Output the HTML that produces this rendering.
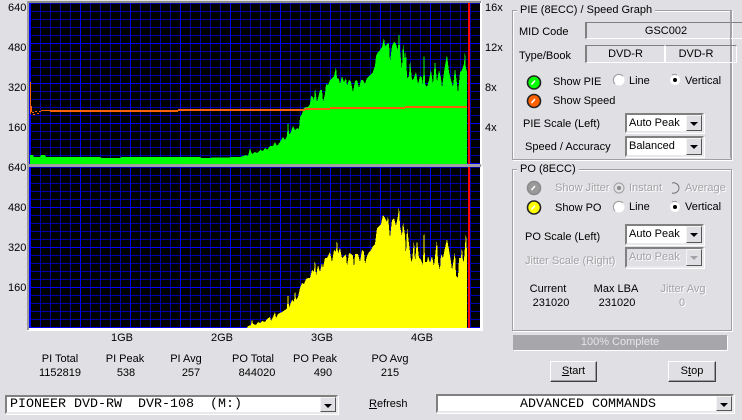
<!DOCTYPE html>
<html><head><meta charset="utf-8"><title>PIE / PO Scan</title>
<style>
html,body{margin:0;padding:0;background:#e0dfe3}
body{position:relative;width:742px;height:420px;overflow:hidden;font:11px "Liberation Sans",Arial,sans-serif;color:#000}
.t{position:absolute;line-height:14px;white-space:nowrap}
.c{position:absolute;line-height:14px;white-space:nowrap;width:100px;text-align:center}
.d{color:#a3a2a6;text-shadow:1px 1px 0 #fff}
.g{position:absolute;border:1px solid #a0a0a4;box-shadow:1px 1px 0 #fff,inset 1px 1px 0 #fff}
.lg{position:absolute;background:#e0dfe3;padding:0 3px;line-height:14px;white-space:nowrap}
.s{position:absolute;box-sizing:border-box;border:1px solid;border-color:#808080 #fff #fff #808080;text-align:center;line-height:16px}
.cb{position:absolute;box-sizing:border-box;background:#fff;border:2px solid;border-color:#808080 #e9e9ec #e9e9ec #808080;box-shadow:1px 1px 0 #fff;line-height:17px;white-space:nowrap;padding-left:2px}
.cb.off{background:#e0dfe3;color:#a3a2a6;text-shadow:1px 1px 0 #fff}
.ar{position:absolute;right:0;top:0;bottom:0;width:16px;background:#e0dfe3;box-sizing:border-box;border:1px solid;border-color:#f4f4f4 #555 #555 #f4f4f4}
.ar:after{content:"";position:absolute;left:3px;top:6px;border:4px solid transparent;border-top:4px solid #000;border-bottom:0}
.off .ar:after{border-top-color:#a3a2a6}
.mono{font-family:"Liberation Mono","Courier New",monospace;font-size:13.33px}
.b{position:absolute;box-sizing:border-box;background:#e0dfe3;border:1px solid;border-color:#fff #404040 #404040 #fff;box-shadow:inset -1px -1px 0 #9d9da1;text-align:center;line-height:18px}
svg{position:absolute;left:0;top:0}
</style></head><body>

<svg width="490" height="335" shape-rendering="crispEdges">
<defs>
<pattern id="g1" x="0" y="3" width="10" height="8" patternUnits="userSpaceOnUse"><rect width="10" height="8" fill="#000"/><rect width="1" height="8" fill="#0000a8"/><rect width="10" height="1" fill="#0000a8"/></pattern>
<pattern id="g2" x="0" y="167" width="10" height="8" patternUnits="userSpaceOnUse"><rect width="10" height="8" fill="#000"/><rect width="1" height="8" fill="#0000a8"/><rect width="10" height="1" fill="#0000a8"/></pattern>
</defs>
<rect x="27" y="1" width="455" height="164" fill="#fff"/>
<rect x="27" y="166" width="456" height="165" fill="#fff"/>
<rect x="27" y="1" width="454" height="2" fill="#8c8c8c"/>
<rect x="27" y="1" width="2" height="329" fill="#9a9a9a"/>
<rect x="27" y="164" width="454" height="3" fill="#a0a0a0"/>
<rect x="29" y="3" width="451" height="161" fill="url(#g1)"/>
<rect x="29" y="167" width="451" height="161" fill="url(#g2)"/>
<path fill="none" stroke="#0000ff" d="M30.5 3V164M80.5 3V164M130.5 3V164M180.5 3V164M230.5 3V164M280.5 3V164M330.5 3V164M380.5 3V164M430.5 3V164M30 43.5H480M30 83.5H480M30 123.5H480M30 163.5H480M30.5 167V328M80.5 167V328M130.5 167V328M180.5 167V328M230.5 167V328M280.5 167V328M330.5 167V328M380.5 167V328M430.5 167V328M30 207.5H480M30 247.5H480M30 287.5H480M30 327.5H480"/>
<rect x="29" y="3" width="2" height="161" fill="#0000ff"/>
<rect x="29" y="167" width="2" height="161" fill="#0000ff"/>
<polygon fill="#00ff00" points="30,164 30,155 33,155 34,157 40,157 41,155 45,155 46,157 100,157 101,158 120,158 121,157 200,157 201,158 240,157 246,155 248,156 250,148 252,154 255,152 257,153 260,150 263,151 265,148 267,150 270,146 273,146 275,142 277,146 280,142 283,137 285,140 287,136 288,120 289,134 291,132 293,126 295,130 297,128 299,129 300,117 302,114 304,108 306,107 308,107 310,104 311,96 313,97 314,100 315,88 317,102 319,94 320,90 322,90 323,102 325,94 326,84 328,85 330,80 332,78 334,76 336,67 337,78 339,79 340,84 342,76 344,82 346,78 347,86 349,80 351,82 353,92 355,81 357,80 359,88 361,80 363,80 365,84 367,78 369,76 371,74 373,72 375,66 376,56 378,52 380,50 382,47 384,38 385,46 387,44 389,43 390,62 392,46 394,42 396,44 398,50 399,30 400,50 402,70 403,43 405,60 406,50 407,78 409,76 410,60 412,80 414,78 416,72 418,84 420,76 422,78 423,86 424,47 425,84 427,87 429,80 431,70 433,84 435,60 437,82 439,70 441,78 442,88 444,72 446,60 447,55 449,72 451,80 453,87 455,68 457,84 458,93 460,72 462,70 464,64 465,50 466,72 467,68 467,164"/>
<g fill="#f8600a">
<rect x="30" y="82" width="1" height="32"/>
<rect x="31" y="106" width="1" height="6"/>
<rect x="32" y="112" width="2" height="1"/>
<rect x="33" y="114" width="2" height="1"/>
<rect x="35" y="111" width="2" height="1"/>
<rect x="37" y="113" width="2" height="1"/>
<rect x="39" y="111" width="2" height="1"/>
<rect x="41" y="110" width="9" height="1"/>
<rect x="50" y="110" width="128" height="2"/>
<rect x="178" y="109" width="127" height="2"/>
<rect x="305" y="108" width="25" height="2"/>
<rect x="330" y="107" width="75" height="2"/>
<rect x="405" y="106" width="62" height="2"/>
</g>
<polygon fill="#ffff00" points="247,328 248,326 251,325 252,319 253,324 256,325 258,322 260,323 262,321 265,322 267,319 270,317 271,321 273,317 275,312 276,318 278,314 282,312 285,310 287,308 288,292 289,308 290,305 292,300 294,302 295,290 296,300 298,297 300,288 302,283 304,284 306,279 308,278 310,278 312,270 314,272 315,259 316,276 318,265 320,272 322,263 323,268 325,258 327,258 329,254 330,252 332,262 334,250 336,252 337,239 338,254 340,248 342,258 344,256 346,254 347,266 349,253 351,254 353,256 354,268 355,254 358,254 360,262 362,250 364,252 365,264 367,256 369,252 371,250 373,246 375,244 377,228 379,226 381,224 383,215 385,218 387,222 388,216 390,238 392,220 394,218 396,226 398,216 399,206 400,226 402,236 403,222 405,235 406,256 407,227 409,244 411,260 412,262 414,240 415,262 417,240 419,258 421,260 423,265 424,225 425,262 427,262 428,256 430,263 432,256 434,266 436,248 437,240 438,262 440,270 441,254 443,258 445,248 447,239 449,250 451,262 452,270 454,258 455,252 456,276 458,278 459,258 461,258 462,247 463,262 464,260 466,232 467,253 467,328"/>
<rect x="468" y="3" width="2" height="161" fill="#ff0000"/>
<rect x="468" y="167" width="2" height="161" fill="#ff0000"/>
</svg>

<div class="t" style="left:8px;top:1px">640</div>
<div class="t" style="left:8px;top:41px">480</div>
<div class="t" style="left:8px;top:81px">320</div>
<div class="t" style="left:8px;top:121px">160</div>
<div class="t" style="left:8px;top:161px">640</div>
<div class="t" style="left:8px;top:201px">480</div>
<div class="t" style="left:8px;top:241px">320</div>
<div class="t" style="left:8px;top:281px">160</div>
<div class="t" style="left:485px;top:1px">16x</div>
<div class="t" style="left:485px;top:41px">12x</div>
<div class="t" style="left:485px;top:81px">8x</div>
<div class="t" style="left:485px;top:121px">4x</div>

<div class="c" style="left:72px;top:331px">1GB</div>
<div class="c" style="left:172px;top:331px">2GB</div>
<div class="c" style="left:272px;top:331px">3GB</div>
<div class="c" style="left:372px;top:331px">4GB</div>

<div class="c" style="left:10px;top:352px">PI Total</div>
<div class="c" style="left:75px;top:352px">PI Peak</div>
<div class="c" style="left:136px;top:352px">PI Avg</div>
<div class="c" style="left:203px;top:352px">PO Total</div>
<div class="c" style="left:265px;top:352px">PO Peak</div>
<div class="c" style="left:340px;top:352px">PO Avg</div>
<div class="c" style="left:10px;top:366px">1152819</div>
<div class="c" style="left:76px;top:366px">538</div>
<div class="c" style="left:141px;top:366px">257</div>
<div class="c" style="left:207px;top:366px">844020</div>
<div class="c" style="left:273px;top:366px">490</div>
<div class="c" style="left:340px;top:366px">215</div>

<div class="g" style="left:512px;top:10px;width:218px;height:148px"></div>
<div class="lg" style="left:517px;top:3px">PIE (8ECC) / Speed Graph</div>
<div class="t" style="left:519px;top:25px">MID Code</div>
<div class="s" style="left:585px;top:22px;width:157px;height:17px;padding-right:0;padding-left:3px;border-width:1px 0 1px 2px">GSC002</div>
<div style="position:absolute;left:730px;top:11px;width:1px;height:147px;background:#a0a0a4"></div>
<div class="t" style="left:519px;top:49px">Type/Book</div>
<div class="s" style="left:585px;top:45px;width:80px;height:18px;border-left-width:2px">DVD-R</div>
<div class="s" style="left:665px;top:45px;width:72px;height:18px;border-left-color:#fff;padding-right:10px">DVD-R</div>

<svg width="742" height="420" style="pointer-events:none">
<g stroke="#222" stroke-width="1.6">
<circle cx="534" cy="82.5" r="6.5" fill="#00ff00"/>
<circle cx="534" cy="101" r="6.5" fill="#ff6000"/>
<circle cx="534" cy="188" r="6.5" fill="#9a9a9a" stroke="#8a8a8a"/>
<circle cx="534" cy="207.5" r="6.5" fill="#ffff00"/>
</g>
<g stroke="#fff" stroke-width="1.5" fill="none">
<path d="M531.5 84.5L535 80.5M531.5 103L535 99M531.5 190L535 186M531.5 209.5L535 205.5"/>
</g>
<g fill="#fff">
<circle cx="619" cy="80" r="5.5"/>
<circle cx="619" cy="207" r="5.5"/>
<circle cx="675" cy="80" r="5"/>
<circle cx="675" cy="207" r="5"/>
</g>
<g fill="none" stroke="#9a9a9a" stroke-width="1">
<path d="M615 84A5.5 5.5 0 0 1 623 76"/>
<path d="M615 211A5.5 5.5 0 0 1 623 203"/>
<path d="M672 75A5.5 5.5 0 0 1 677 75"/>
<path d="M672 202A5.5 5.5 0 0 1 677 202"/>
<circle cx="619" cy="188" r="5" stroke="#a0a0a0"/>
<path d="M672 183A5.5 5.5 0 0 1 679 188A5.5 5.5 0 0 1 672 193" stroke="#707070"/>
</g>
<circle cx="675" cy="80" r="2" fill="#000"/>
<circle cx="675" cy="207" r="2" fill="#000"/>
<circle cx="619" cy="188" r="2" fill="#8a8a8a"/>
</svg>

<div class="t" style="left:553px;top:75px">Show PIE</div>
<div class="t" style="left:553px;top:94px">Show Speed</div>
<div class="t" style="left:629px;top:74px">Line</div>
<div class="t" style="left:685px;top:74px">Vertical</div>
<div class="t" style="left:523px;top:117px">PIE Scale (Left)</div>
<div class="cb" style="left:625px;top:113px;width:79px;height:20px">Auto Peak<span class="ar"></span></div>
<div class="t" style="left:525px;top:140px">Speed / Accuracy</div>
<div class="cb" style="left:625px;top:136px;width:79px;height:21px">Balanced<span class="ar"></span></div>

<div class="g" style="left:512px;top:169px;width:218px;height:160px"></div>
<div class="lg" style="left:517px;top:162px">PO (8ECC)</div>
<div class="t d" style="left:555px;top:181px">Show Jitter</div>
<div class="t d" style="left:629px;top:181px">Instant</div>
<div class="t d" style="left:685px;top:181px">Average</div>
<div class="t" style="left:555px;top:201px">Show PO</div>
<div class="t" style="left:629px;top:200px">Line</div>
<div class="t" style="left:685px;top:200px">Vertical</div>
<div class="t" style="left:525px;top:230px">PO Scale (Left)</div>
<div class="cb" style="left:625px;top:224px;width:79px;height:21px">Auto Peak<span class="ar"></span></div>
<div class="t d" style="left:525px;top:254px">Jitter Scale (Right)</div>
<div class="cb off" style="left:625px;top:247px;width:79px;height:21px">Auto Peak<span class="ar"></span></div>
<div class="c" style="left:498px;top:282px">Current</div>
<div class="c" style="left:566px;top:282px">Max LBA</div>
<div class="c d" style="left:633px;top:282px">Jitter Avg</div>
<div class="c" style="left:501px;top:296px">231020</div>
<div class="c" style="left:567px;top:296px">231020</div>
<div class="c d" style="left:632px;top:296px">0</div>

<div style="position:absolute;left:513px;top:335px;width:214px;height:15px;background:#a7a6aa;box-shadow:1px 1px 0 #fff;color:#e6e5e9;text-align:center;line-height:15px">100% Complete</div>
<div class="b" style="left:550px;top:361px;width:47px;height:21px"><u>S</u>tart</div>
<div class="b" style="left:668px;top:361px;width:48px;height:21px">S<u>t</u>op</div>

<div class="cb mono" style="left:5px;top:395px;width:333px;height:19px;padding-left:3px;line-height:16px"><span style="white-space:pre">PIONEER DVD-RW  DVR-108  (M:)</span><span class="ar"></span></div>
<div class="t" style="left:369px;top:397px"><u>R</u>efresh</div>
<div class="cb mono" style="left:436px;top:394px;width:298px;height:19px;text-align:center;padding-left:6px;line-height:17px">ADVANCED COMMANDS<span class="ar"></span></div>
</body></html>
